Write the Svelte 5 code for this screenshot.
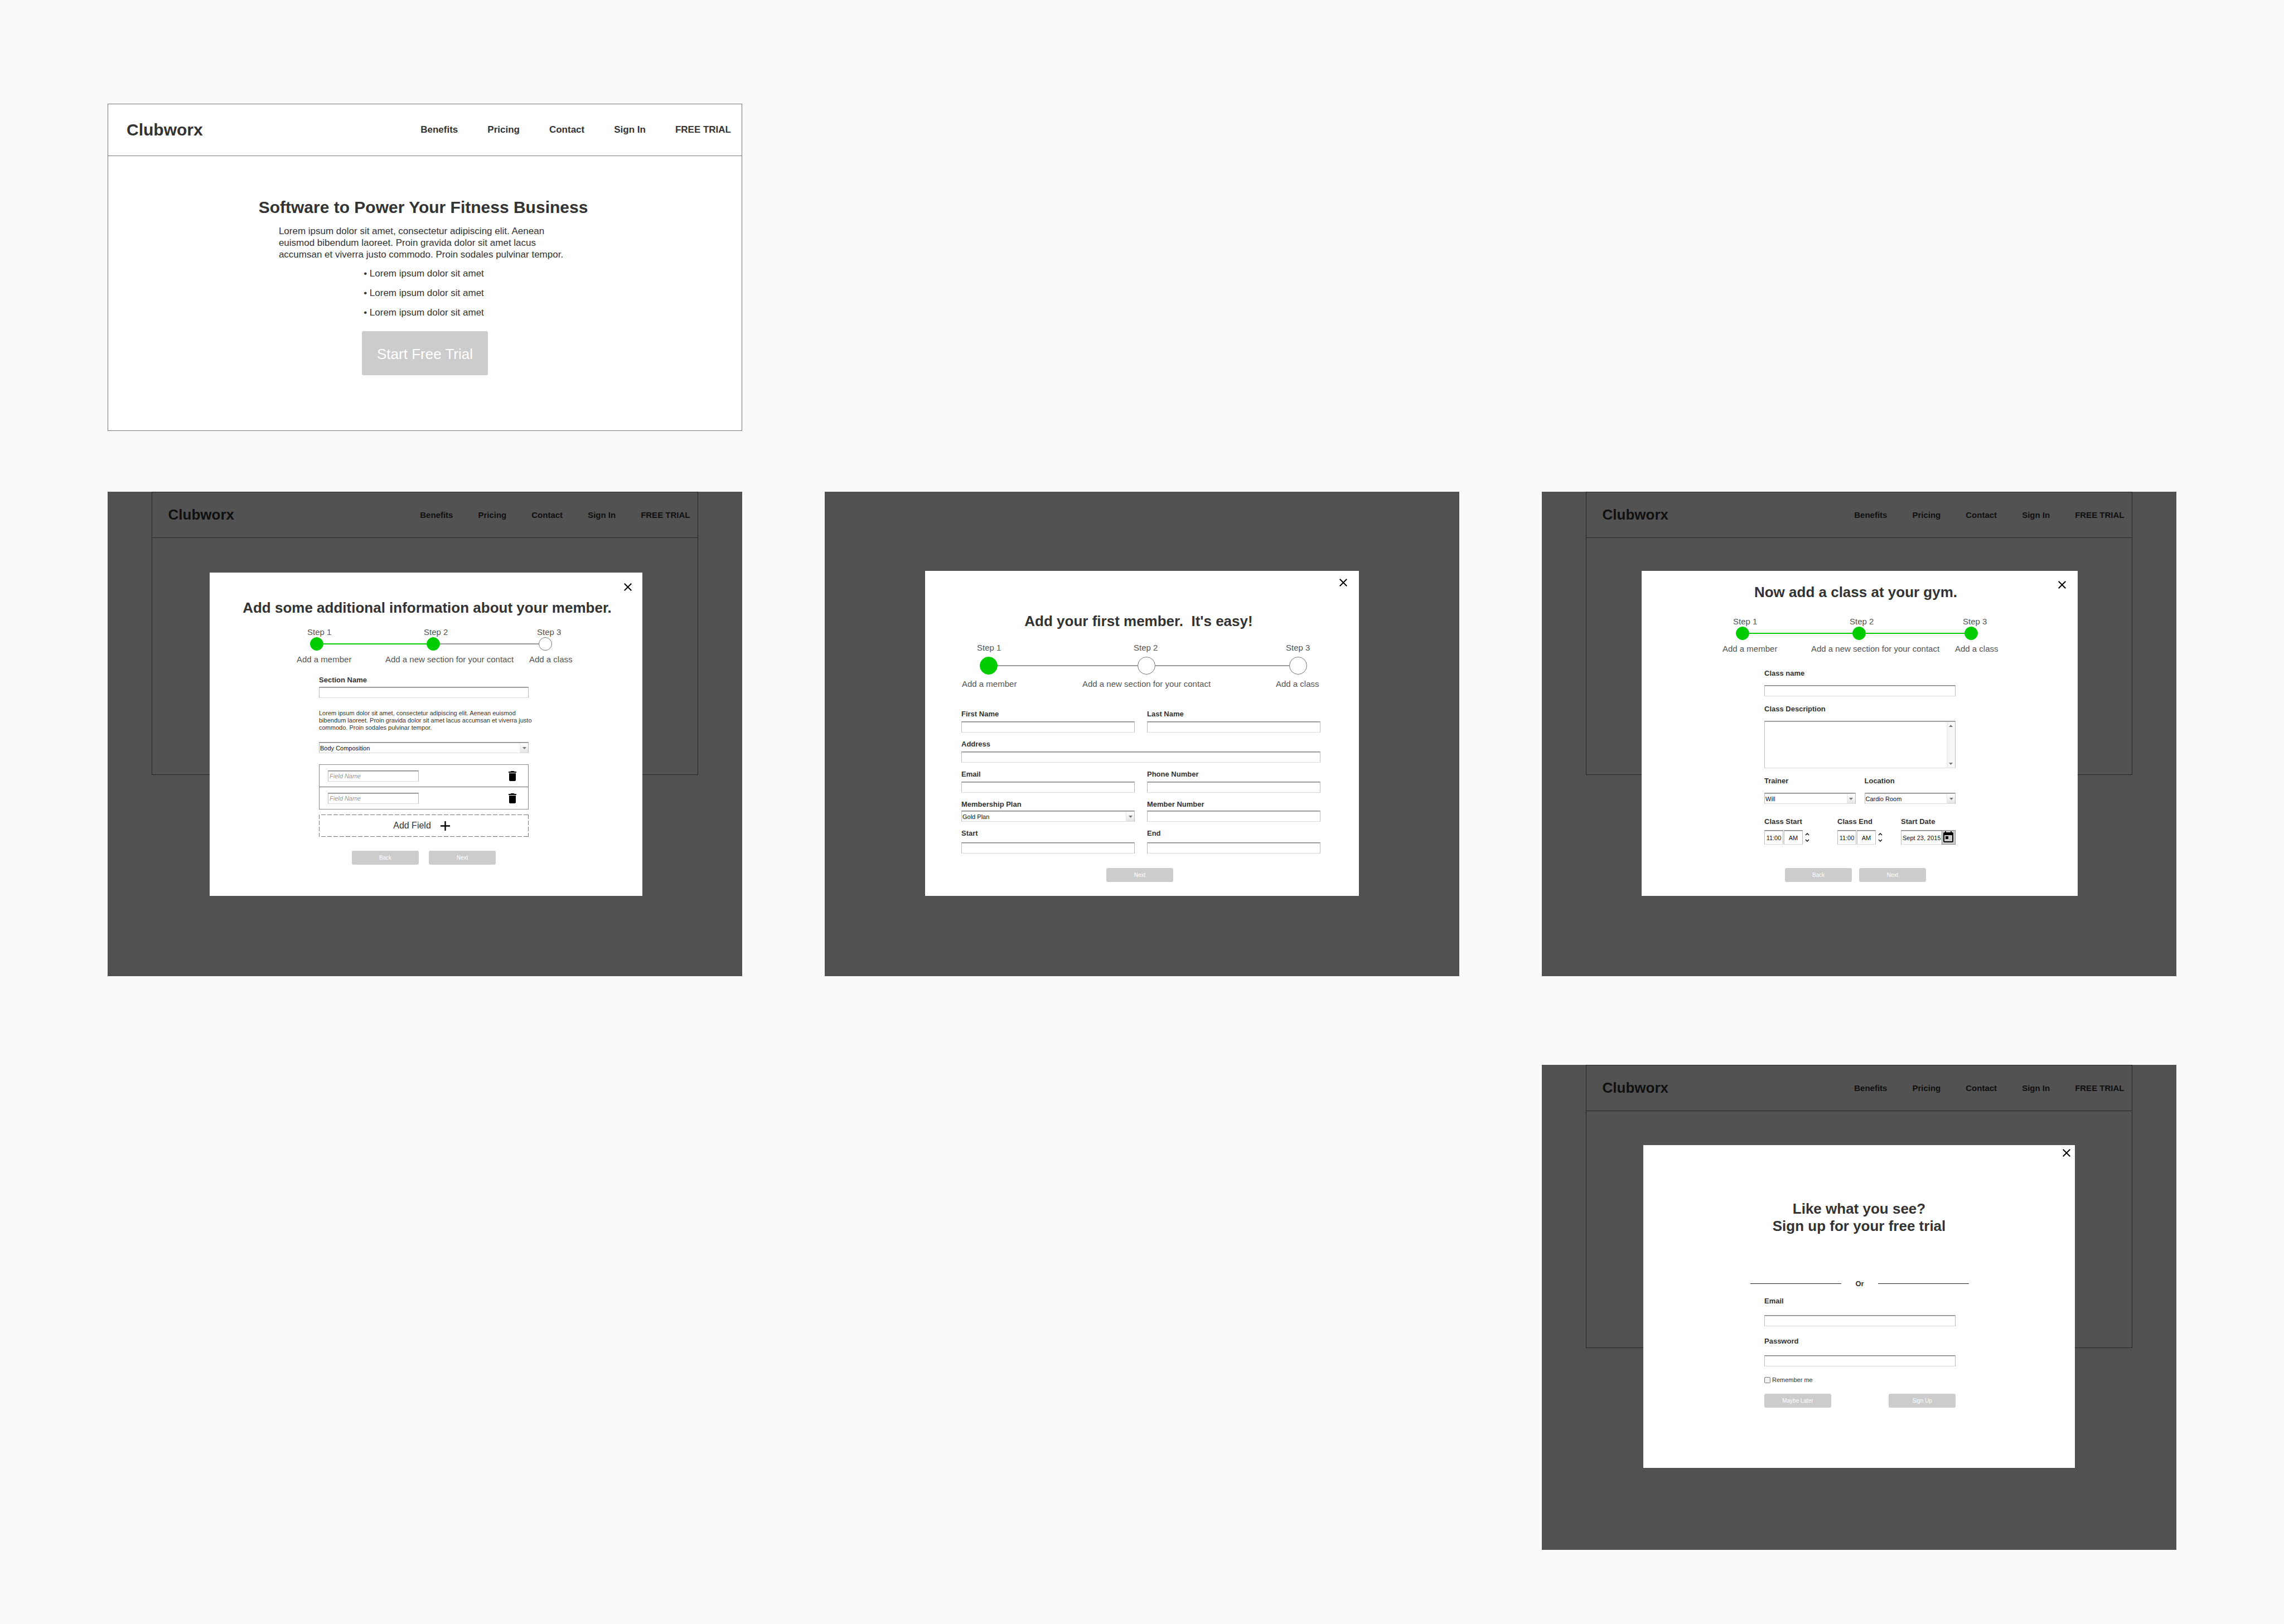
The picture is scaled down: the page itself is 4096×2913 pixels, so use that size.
<script>
  const navLinks = ['Benefits', 'Pricing', 'Contact', 'Sign In', 'FREE TRIAL'];

  const steps = [
    { label: 'Step 1', text: 'Add a member' },
    { label: 'Step 2', text: 'Add a new section for your contact' },
    { label: 'Step 3', text: 'Add a class' }
  ];

  const bullets = ['Lorem ipsum dolor sit amet', 'Lorem ipsum dolor sit amet', 'Lorem ipsum dolor sit amet'];
  const customFields = ['field-1', 'field-2'];
  const times = [
    { id: 'class-start', label: 'Class Start' },
    { id: 'class-end', label: 'Class End' }
  ];
</script>

{#snippet siteHeader()}
  <header class="site-header">
    <a class="brand" href="#home">Clubworx</a>
    <nav>
      {#each navLinks as link}
        <a href="#{link.toLowerCase().replace(' ', '-')}">{link}</a>
      {/each}
    </nav>
  </header>
{/snippet}

{#snippet closeButton()}
  <button class="close" type="button" aria-label="Close">
    <svg viewBox="5 5 14 14" aria-hidden="true">
      <path d="M19 6.41 17.59 5 12 10.59 6.41 5 5 6.41 10.59 12 5 17.59 6.41 19 12 13.41 17.59 19 19 17.59 13.41 12z" />
    </svg>
  </button>
{/snippet}

{#snippet stepper(done, size)}
  <div class="stepper {size}">
    <div class="step-labels">
      {#each steps as step}<span>{step.label}</span>{/each}
    </div>
    <div class="track">
      {#each steps as step, i}
        {#if i > 0}<span class="line" class:done={i < done}></span>{/if}
        <span class="dot" class:done={i < done}></span>
      {/each}
    </div>
    <div class="step-texts">
      {#each steps as step}<span>{step.text}</span>{/each}
    </div>
  </div>
{/snippet}

{#snippet dropdown(id, value)}
  <span class="dropdown">
    <select {id}><option>{value}</option></select>
    <span class="arrow"><svg viewBox="0 0 7 4" aria-hidden="true"><path d="M0 0h7L3.500 4z" /></svg></span>
  </span>
{/snippet}

{#snippet textField(id, label, type)}
  <div class="field">
    <label for={id}>{label}</label>
    <input {id} {type} />
  </div>
{/snippet}

<main>
  <div class="row">
    <section class="site landing">
      {@render siteHeader()}
      <div class="hero">
        <h1>Software to Power Your Fitness Business</h1>
        <p>
          Lorem ipsum dolor sit amet, consectetur adipiscing elit. Aenean<br />
          euismod bibendum laoreet. Proin gravida dolor sit amet lacus<br />
          accumsan et viverra justo commodo. Proin sodales pulvinar tempor.
        </p>
        <ul>
          {#each bullets as bullet}<li>• {bullet}</li>{/each}
        </ul>
        <button class="cta" type="button">Start Free Trial</button>
      </div>
    </section>
  </div>

  <div class="row second">
    <section class="screen">
      <div class="site backdrop">{@render siteHeader()}</div>
      <div class="overlay">
        <form class="modal section-modal">
          {@render closeButton()}
          <h2>Add some additional information about your member.</h2>
          {@render stepper(2, 'compact')}
          <div class="body">
            {@render textField('section-name', 'Section Name', 'text')}
            <p class="note">
              Lorem ipsum dolor sit amet, consectetur adipiscing elit. Aenean euismod<br />
              bibendum laoreet. Proin gravida dolor sit amet lacus accumsan et viverra justo<br />
              commodo. Proin sodales pulvinar tempor.
            </p>
            {@render dropdown('section-type', 'Body Composition')}
            <ul class="custom-fields">
              {#each customFields as id}
                <li>
                  <input {id} type="text" placeholder="Field Name" aria-label="Field Name" />
                  <button type="button" aria-label="Delete field">
                    <svg viewBox="0 0 24 24" aria-hidden="true">
                      <path d="M6 19c0 1.100.9 2 2 2h8c1.100 0 2-.9 2-2V7H6v12zM19 4h-3.500l-1-1h-5l-1 1H5v2h14V4z" />
                    </svg>
                  </button>
                </li>
              {/each}
            </ul>
            <button class="add-field" type="button">
              Add Field
              <svg viewBox="5 5 14 14" aria-hidden="true"><path d="M19 13h-6v6h-2v-6H5v-2h6V5h2v6h6v2z" /></svg>
            </button>
            <div class="actions">
              <button class="btn" type="button">Back</button>
              <button class="btn" type="button">Next</button>
            </div>
          </div>
        </form>
      </div>
    </section>

    <section class="screen">
      <div class="overlay">
        <form class="modal member-modal">
          {@render closeButton()}
          <h2>Add your first member.&nbsp; It's easy!</h2>
          {@render stepper(1, 'wide')}
          <div class="body">
            <div class="pair">
              {@render textField('first-name', 'First Name', 'text')}
              {@render textField('last-name', 'Last Name', 'text')}
            </div>
            {@render textField('address', 'Address', 'text')}
            <div class="pair">
              {@render textField('email', 'Email', 'email')}
              {@render textField('phone', 'Phone Number', 'tel')}
            </div>
            <div class="pair tight">
              <div class="field">
                <label for="plan">Membership Plan</label>
                {@render dropdown('plan', 'Gold Plan')}
              </div>
              {@render textField('member-number', 'Member Number', 'text')}
            </div>
            <div class="pair loose">
              {@render textField('plan-start', 'Start', 'text')}
              {@render textField('plan-end', 'End', 'text')}
            </div>
            <div class="actions">
              <button class="btn" type="button">Next</button>
            </div>
          </div>
        </form>
      </div>
    </section>

    <section class="screen">
      <div class="site backdrop">{@render siteHeader()}</div>
      <div class="overlay">
        <form class="modal class-modal">
          {@render closeButton()}
          <h2>Now add a class at your gym.</h2>
          {@render stepper(3, 'compact')}
          <div class="body">
            {@render textField('class-name', 'Class name', 'text')}
            <div class="field">
              <label for="class-description">Class Description</label>
              <div class="text-area">
                <textarea id="class-description"></textarea>
                <span class="scrollbar">
                  <svg viewBox="0 0 7 4" aria-hidden="true"><path d="M0 4h7L3.500 0z" /></svg>
                  <svg viewBox="0 0 7 4" aria-hidden="true"><path d="M0 0h7L3.500 4z" /></svg>
                </span>
              </div>
            </div>
            <div class="pair">
              <div class="field">
                <label for="trainer">Trainer</label>
                {@render dropdown('trainer', 'Will')}
              </div>
              <div class="field">
                <label for="location">Location</label>
                {@render dropdown('location', 'Cardio Room')}
              </div>
            </div>
            <div class="schedule">
              {#each times as time}
                <div class="field">
                  <label for={time.id}>{time.label}</label>
                  <div class="time">
                    <input id={time.id} type="text" value="11:00" />
                    <input type="text" value="AM" aria-label="{time.label} period" />
                    <span class="spin">
                      <button type="button" aria-label="Later">
                        <svg viewBox="0 0 8 5" aria-hidden="true"><path d="M1 4l3-3 3 3" /></svg>
                      </button>
                      <button type="button" aria-label="Earlier">
                        <svg viewBox="0 0 8 5" aria-hidden="true"><path d="M1 1l3 3 3-3" /></svg>
                      </button>
                    </span>
                  </div>
                </div>
              {/each}
              <div class="field">
                <label for="start-date">Start Date</label>
                <div class="date">
                  <input id="start-date" type="text" value="Sept 23, 2015" />
                  <button type="button" aria-label="Open calendar">
                    <svg viewBox="0 0 24 24" aria-hidden="true">
                      <path d="M19 3h-1V1h-2v2H8V1H6v2H5c-1.110 0-1.990.9-1.990 2L3 19c0 1.100.89 2 2 2h14c1.100 0 2-.9 2-2V5c0-1.100-.9-2-2-2zm0 16H5V8h14v11zM7 10h5v5H7z" />
                    </svg>
                  </button>
                </div>
              </div>
            </div>
            <div class="actions">
              <button class="btn" type="button">Back</button>
              <button class="btn" type="button">Next</button>
            </div>
          </div>
        </form>
      </div>
    </section>
  </div>

  <div class="row third">
    <section class="screen">
      <div class="site backdrop">{@render siteHeader()}</div>
      <div class="overlay">
        <form class="modal signup-modal">
          {@render closeButton()}
          <h2>Like what you see?<br />Sign up for your free trial</h2>
          <div class="divider"><span></span>Or<span></span></div>
          <div class="body">
            {@render textField('signup-email', 'Email', 'email')}
            {@render textField('signup-password', 'Password', 'password')}
            <div class="remember">
              <input id="remember" type="checkbox" />
              <label for="remember">Remember me</label>
            </div>
            <div class="actions">
              <button class="btn" type="button">Maybe Later</button>
              <button class="btn" type="button">Sign Up</button>
            </div>
          </div>
        </form>
      </div>
    </section>
  </div>
</main>

<style>
  :global(body) {
    background: #fafafa;
  }

  main {
    box-sizing: border-box;
    padding: 186px 193px 134px;
    font-family: 'Liberation Sans', Arial, sans-serif;
    color: #333;
  }

  main :global(*) {
    box-sizing: border-box;
  }

  h1,
  h2,
  p,
  ul {
    margin: 0;
    padding: 0;
  }

  ul {
    list-style: none;
  }

  a {
    color: inherit;
    text-decoration: none;
  }

  button,
  input,
  select,
  textarea {
    margin: 0;
    padding: 0;
    border: 0;
    border-radius: 0;
    background: none;
    font-family: inherit;
    color: inherit;
  }

  svg {
    display: block;
  }

  .row {
    display: grid;
    grid-template-columns: repeat(3, minmax(0, 1fr));
    column-gap: 148px;
  }

  .second {
    margin-top: 109px;
  }

  .third {
    margin-top: 159px;
  }

  .third .screen {
    grid-column: 3;
  }

  /* Marketing site */
  .site {
    border: 1px solid #777;
    background: #fff;
  }

  .site-header {
    display: flex;
    align-items: center;
    justify-content: space-between;
    height: 93px;
    padding: 0 19px 0 33px;
    border-bottom: 1px solid #777;
    font-weight: bold;
  }

  .brand {
    font-size: 30px;
  }

  nav {
    display: flex;
    gap: 53px;
    font-size: 17px;
  }

  .hero {
    display: flex;
    flex-direction: column;
    align-items: center;
    padding: 75px 0 99px;
    font-size: 17px;
    line-height: 21px;
  }

  .hero h1 {
    padding-right: 6px;
    font-size: 30px;
    line-height: 34px;
  }

  .hero p {
    margin-top: 15px;
    padding-right: 14px;
  }

  .hero ul {
    display: grid;
    gap: 14px;
    margin-top: 13px;
    padding-right: 4px;
  }

  .cta {
    width: 226px;
    height: 79px;
    margin-top: 23px;
    padding-top: 3px;
    border-radius: 3px;
    background: #ccc;
    color: #fff;
    font-size: 26px;
  }

  /* Dimmed screens */
  .screen {
    display: grid;
    background: #fafafa;
  }

  .screen > * {
    grid-area: 1 / 1;
  }

  .backdrop {
    justify-self: center;
    width: 86.2%;
    height: 508px;
  }

  .backdrop .site-header {
    height: 82px;
    padding: 0 14px 0 29px;
  }

  .backdrop .brand {
    font-size: 26px;
  }

  .backdrop nav {
    gap: 45px;
    font-size: 15px;
  }

  .overlay {
    z-index: 1;
    display: flex;
    justify-content: center;
    align-items: flex-start;
    padding: 142px 0 144px;
    background: rgba(0, 0, 0, 0.68);
  }

  .modal {
    position: relative;
    width: min(100%, 778px);
    background: #fff;
  }

  .modal h2 {
    font-size: 26px;
    line-height: 30px;
    text-align: center;
  }

  .close {
    position: absolute;
    top: 18px;
    right: 21px;
    width: 14px;
    height: 14px;
  }

  /* Stepper */
  .stepper {
    color: #555;
    font-size: 15px;
    line-height: 17px;
    white-space: nowrap;
  }

  .step-labels,
  .step-texts {
    display: grid;
  }

  .track {
    display: flex;
    align-items: center;
  }

  .dot {
    width: 24px;
    height: 24px;
    border: 1px solid #777;
    border-radius: 50%;
  }

  .line {
    height: 2px;
    background: #999;
  }

  .dot.done {
    border-color: #0c0;
    background: #0c0;
  }

  .line.done {
    background: #0c0;
  }

  .compact .step-labels {
    grid-template-columns: 209px 203px auto;
    padding-left: 19px;
  }

  .compact .track {
    margin: 1px 0 7px;
    padding-left: 24px;
  }

  .compact .line {
    width: 185px;
  }

  .compact .line ~ .line {
    width: 177px;
  }

  .compact .step-texts {
    grid-template-columns: 159px 258px auto;
  }

  .wide .step-labels {
    grid-template-columns: 281px 273px auto;
    padding-left: 27px;
  }

  .wide .track {
    margin: 8px 0;
    padding-left: 32px;
  }

  .wide .dot {
    width: 32px;
    height: 32px;
  }

  .wide .line {
    width: 251px;
  }

  .wide .line ~ .line {
    width: 240px;
  }

  .wide .step-texts {
    grid-template-columns: 216px 347px auto;
  }

  /* Form controls */
  .field {
    display: flex;
    flex-direction: column;
    gap: 6px;
    min-width: 0;
  }

  .field label {
    font-size: 13px;
    font-weight: bold;
    line-height: 15px;
  }

  .modal input:not([type='checkbox']),
  .modal select,
  .modal textarea {
    display: block;
    width: 100%;
    height: 20px;
    padding-top: 1px;
    border: 1px solid #bbb;
    border-top-color: #808080;
    border-bottom-color: #ddd;
    background: #fff;
    box-shadow: inset 0 1px #bbb;
    color: #111;
    font-size: 11px;
  }

  .dropdown,
  .text-area {
    display: grid;
  }

  .dropdown > *,
  .text-area > * {
    grid-area: 1 / 1;
  }

  .modal select {
    appearance: none;
    padding-left: 1px;
  }

  .arrow {
    display: grid;
    place-items: center;
    justify-self: end;
    width: 15px;
    margin: 2px 1px 1px;
    border-left: 1px solid #e8e8e8;
    background: linear-gradient(#fff, #e4e4e4);
    pointer-events: none;
  }

  .arrow svg,
  .scrollbar svg {
    width: 7px;
    height: 4px;
    fill: #777;
  }

  .modal textarea {
    height: 85px;
    resize: none;
    overflow: hidden;
  }

  .scrollbar {
    display: flex;
    flex-direction: column;
    align-items: center;
    justify-content: space-between;
    justify-self: end;
    width: 15px;
    margin: 2px 1px 1px;
    padding: 5px 0;
    background: linear-gradient(90deg, #ebebeb, #f8f8f8 30%);
    pointer-events: none;
  }

  .actions {
    display: flex;
    justify-content: center;
  }

  .btn {
    width: 120px;
    height: 25px;
    border-radius: 3px;
    background: #ccc;
    color: #fff;
    font-size: 10px;
  }

  .pair {
    display: grid;
    grid-template-columns: repeat(2, minmax(0, 1fr));
  }

  /* Custom section modal */
  .section-modal {
    width: min(100%, 776px);
    margin: 3px 0 0 4px;
    padding: 48px 0 56px;
  }

  .section-modal .close {
    top: 19px;
    right: 19px;
  }

  .section-modal h2 {
    padding-left: 4px;
  }

  .section-modal .stepper {
    margin: 20px 0 21px 156px;
  }

  .section-modal .body {
    width: 376px;
    margin-left: 196px;
  }

  .section-modal .field {
    gap: 5px;
  }

  .note {
    margin: 21px 0 19px;
    font-size: 11px;
    line-height: 13px;
    white-space: nowrap;
  }

  .custom-fields {
    margin-top: 20px;
    border: 1px solid #888;
  }

  .custom-fields li {
    display: flex;
    align-items: center;
    justify-content: space-between;
    height: 39px;
    padding: 0 16px 0 15px;
  }

  .custom-fields li + li {
    height: 40px;
    border-top: 1px solid #666;
  }

  .custom-fields input[type='text'] {
    width: 163px;
    padding-left: 2px;
  }

  .custom-fields input::placeholder {
    color: #999;
    font-style: italic;
    opacity: 1;
  }

  .custom-fields svg {
    width: 24px;
    height: 24px;
  }

  .add-field {
    display: flex;
    align-items: center;
    justify-content: center;
    gap: 17px;
    width: 100%;
    height: 40px;
    margin-top: 9px;
    padding-right: 8px;
    background:
      linear-gradient(90deg, #777 8px, transparent 8px) 4px 0 / 11px 1px repeat-x,
      linear-gradient(90deg, #777 8px, transparent 8px) 4px 100% / 11px 1px repeat-x,
      linear-gradient(#777 8px, transparent 8px) 0 0 / 1px 11px repeat-y,
      linear-gradient(#777 8px, transparent 8px) 100% 0 / 1px 11px repeat-y;
    font-size: 16px;
  }

  .add-field svg {
    width: 17px;
    height: 17px;
    fill: #000;
  }

  .section-modal .actions {
    gap: 18px;
    margin-top: 25px;
  }

  /* Member modal */
  .member-modal {
    padding: 75px 0 25px;
  }

  .member-modal .close {
    top: 14px;
  }

  .member-modal h2 {
    padding-right: 12px;
  }

  .member-modal .stepper {
    margin: 24px 0 38px 66px;
  }

  .member-modal .body {
    display: grid;
    gap: 13px;
    margin: 0 69px 0 65px;
  }

  .member-modal .pair {
    column-gap: 22px;
  }

  .tight .field,
  .tight :global(.field) {
    gap: 4px;
  }

  .loose :global(.field) {
    gap: 9px;
  }

  .member-modal .actions {
    margin-top: 13px;
    padding-right: 4px;
  }

  /* Class modal */
  .class-modal {
    width: min(100%, 782px);
    margin-left: 2px;
    padding: 23px 0 25px;
  }

  .class-modal h2 {
    padding-right: 14px;
  }

  .class-modal .stepper {
    margin: 29px 0 28px 145px;
  }

  .class-modal .body {
    display: grid;
    gap: 15px;
    width: 343px;
    margin-left: 220px;
  }

  .class-modal .field {
    gap: 14px;
  }

  .class-modal .pair {
    column-gap: 16px;
  }

  .schedule {
    display: grid;
    grid-template-columns: 131px 114px 98px;
    margin-top: 9px;
  }

  .class-modal .schedule .field {
    gap: 8px;
  }

  .time,
  .date {
    display: flex;
  }

  .time {
    gap: 1px;
  }

  .modal .schedule input[type='text'] {
    height: 26px;
  }

  .modal .time input[type='text'] {
    width: 34px;
    text-align: center;
  }

  .spin {
    display: flex;
    flex-direction: column;
    justify-content: center;
    gap: 6px;
    margin-left: 3px;
  }

  .spin svg {
    width: 8px;
    height: 5px;
    fill: none;
    stroke: #111;
    stroke-width: 1.5;
  }

  .modal .date input[type='text'] {
    width: 73px;
    padding-left: 2px;
    border-right: 0;
  }

  .date button {
    width: 25px;
    height: 26px;
    border: 1px solid #888;
    background: #ccc;
  }

  .date svg {
    width: 24px;
    height: 24px;
    margin-left: -1px;
  }

  .class-modal .actions {
    gap: 13px;
    margin-top: 27px;
    padding-right: 16px;
  }

  /* Sign-up modal */
  .signup-modal {
    width: min(100%, 774px);
    margin: 2px 0 3px;
    padding: 99px 0 108px;
  }

  .signup-modal .close {
    top: 7px;
    right: 8px;
  }

  .signup-modal h2 {
    line-height: 31px;
  }

  .divider {
    display: grid;
    grid-template-columns: 1fr 66px 1fr;
    align-items: center;
    width: 392px;
    margin: 80px 0 16px 192px;
    font-size: 13px;
    font-weight: bold;
    line-height: 15px;
    text-align: center;
  }

  .divider span {
    height: 1px;
    background: #222;
  }

  .signup-modal .body {
    display: grid;
    gap: 19px;
    width: 343px;
    margin-left: 217px;
  }

  .signup-modal .field {
    gap: 18px;
  }

  .remember {
    display: flex;
    align-items: center;
    gap: 3px;
    height: 11px;
    font-size: 11px;
    line-height: 11px;
  }

  .remember input {
    appearance: none;
    width: 11px;
    height: 11px;
    border: 1px solid #777;
    border-radius: 2px;
    background: #f2f2f2;
  }

  .signup-modal .actions {
    justify-content: space-between;
  }
</style>
